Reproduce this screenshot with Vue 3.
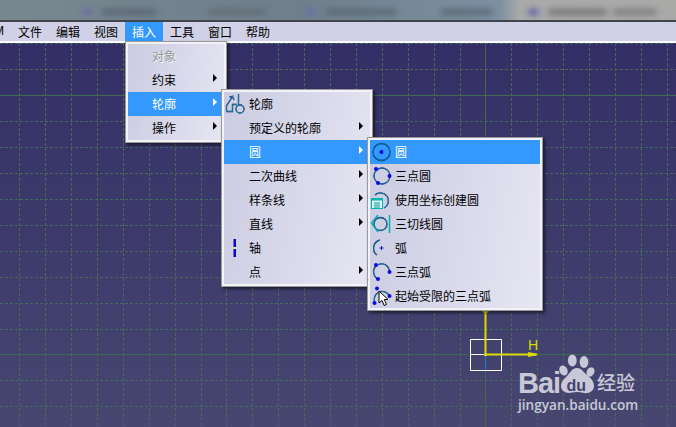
<script setup>
const blobs = [
  { left: 82, width: 10, color: '#6a6aa8' },
  { left: 101, width: 56, color: '#5a6672' },
  { left: 207, width: 60, color: '#626e78' },
  { left: 305, width: 10, color: '#6a6aa8' },
  { left: 325, width: 72, color: '#5c6874' },
  { left: 440, width: 53, color: '#5c6874' },
  { left: 528, width: 11, color: '#5a58a8' },
  { left: 548, width: 59, color: '#747474' },
  { left: 613, width: 44, color: '#7c7c7c' }
]
const topMenus = ['文件', '编辑', '视图', '插入', '工具', '窗口', '帮助']
const vertical = [19, 45, 71, 97, 123, 149, 175, 201, 226, 252, 278, 304, 330, 356, 382, 408, 434, 460, 511, 537, 563, 589, 615, 641, 667]
const horizontal = [43, 69, 121, 147, 173, 199, 225, 251, 277, 303, 329, 380, 406]
const insertRows = [
  { label: '对象', disabled: true },
  { label: '约束', arrow: true },
  { label: '轮廓', arrow: true, active: true },
  { label: '操作', arrow: true }
]
const profileRows = [
  { label: '轮廓', icon: 'profile' },
  { label: '预定义的轮廓', arrow: true },
  { label: '圆', arrow: true, active: true },
  { label: '二次曲线', arrow: true },
  { label: '样条线', arrow: true },
  { label: '直线', arrow: true },
  { label: '轴', icon: 'axis' },
  { label: '点', arrow: true }
]
const circleRows = [
  { label: '圆', icon: 'circle', active: true },
  { label: '三点圆', icon: 'three' },
  { label: '使用坐标创建圆', icon: 'coord' },
  { label: '三切线圆', icon: 'tangent' },
  { label: '弧', icon: 'arc' },
  { label: '三点弧', icon: 'threearc' },
  { label: '起始受限的三点弧', icon: 'limited' }
]
</script>

<template>
  <div class="screen">
    <div class="blurred">
      <span
        v-for="b in blobs"
        :key="b.left"
        class="blob"
        :style="{ left: b.left + 'px', width: b.width + 'px', background: b.color }"
      ></span>
    </div>
    <div class="menubar">
      <span class="clipped">M</span>
      <span v-for="m in topMenus" :key="m" class="top" :class="{ open: m === '插入' }">{{ m }}</span>
    </div>
    <div class="canvas">
      <svg class="scene" viewBox="0 43 676 384" width="676" height="384">
        <g class="dash">
          <line v-for="x in vertical" :key="'v' + x" :x1="x + 0.5" :x2="x + 0.5" y1="43" y2="427" />
          <line v-for="y in horizontal" :key="'h' + y" x1="0" x2="676" :y1="y + 0.5" :y2="y + 0.5" />
        </g>
        <g class="solid">
          <line x1="485.5" x2="485.5" y1="43" y2="427" />
          <line x1="0" x2="676" y1="354.5" y2="354.5" />
          <line x1="0" x2="676" y1="95.5" y2="95.5" />
        </g>
        <g>
          <path d="M470.5 339.5H501.5V370.5H470.5ZM470.5 354.5H485" fill="none" stroke="#fff" />
          <line x1="485.5" x2="485.5" y1="355" y2="370" stroke="#1e78e6" />
          <path d="M485.5 311V354.5H537" fill="none" stroke="#dcdc00" stroke-width="2" />
          <path d="M482 311h7l-2 2h-3zM484 354h3v2h-3zM528 352l8 1.500v2l-8 1.500z" fill="#dcdc00" />
          <text x="528" y="350" class="hlabel">H</text>
        </g>
        <g class="mark">
          <text x="518" y="393" class="bai">Bai</text>
          <ellipse cx="572.300" cy="360.500" rx="4.400" ry="6" />
          <ellipse cx="584" cy="362" rx="4.400" ry="6" />
          <ellipse cx="563.500" cy="370.500" rx="4" ry="5.200" transform="rotate(-25 563.500 370.500)" />
          <ellipse cx="590.500" cy="372" rx="3.800" ry="5" transform="rotate(25 590.500 372)" />
          <path d="M577 368C582 368 584 373 588 376C592 379 594 382 594 386C594 391 589 394 584 393C580 392 576 391.500 572 392.500C566 394 561 391 561 386C561 382 564 379 567 376C570 373 572 368 577 368Z" />
          <text x="566.500" y="391" class="du">du</text>
          <text x="597" y="390" class="jing">经验</text>
          <text x="518" y="410" class="url">jingyan.baidu.com</text>
        </g>
      </svg>
    </div>

    <div class="menu menu-insert">
      <div
        v-for="r in insertRows"
        :key="r.label"
        class="row"
        :class="{ active: r.active, disabled: r.disabled }"
      >
        <span class="slot slot-narrow"></span>
        <span class="label">{{ r.label }}</span>
        <span v-if="r.arrow" class="arrow"></span>
      </div>
    </div>

    <div class="menu menu-profile">
      <div v-for="r in profileRows" :key="r.label + r.arrow" class="row" :class="{ active: r.active }">
        <span class="slot">
          <svg v-if="r.icon === 'profile'" class="icon" viewBox="0 0 24 24">
            <path d="M2.500 19.500V14L8.500 4.500L5.500 5M8.500 4.500L10 8M2.500 19.500H8.500V12.500L13 12.500M14.500 2V12.500" class="ico-outer" />
            <circle cx="16" cy="17" r="4" class="ico-outer" />
            <path d="M2.500 19.500V14L8.500 4.500L5.500 5M8.500 4.500L10 8M2.500 19.500H8.500V12.500L13 12.500M14.500 2V12.500" class="ico-inner" />
            <circle cx="16" cy="17" r="4" class="ico-inner" />
          </svg>
          <svg v-else-if="r.icon === 'axis'" class="icon" viewBox="0 0 24 24">
            <rect x="9.500" y="3" width="2.500" height="8" fill="#0808c8" />
            <rect x="9.500" y="11" width="2.500" height="2" fill="#f0f060" />
            <rect x="9.500" y="13" width="2.500" height="8" fill="#0808c8" />
          </svg>
        </span>
        <span class="label">{{ r.label }}</span>
        <span v-if="r.arrow" class="arrow"></span>
      </div>
    </div>

    <div class="menu menu-circle">
      <div v-for="r in circleRows" :key="r.label" class="row" :class="{ active: r.active }">
        <span class="slot">
          <svg class="icon" viewBox="0 0 24 24">
            <template v-if="r.icon === 'circle'">
              <circle cx="11.500" cy="12" r="8.500" class="ico-outer" />
              <circle cx="11.500" cy="12" r="8.500" class="ico-inner" />
              <circle cx="11.500" cy="12" r="2" class="dot" />
            </template>
            <template v-else-if="r.icon === 'three'">
              <circle cx="12" cy="12" r="8" class="ico-outer" />
              <circle cx="12" cy="12" r="8" class="ico-inner" />
              <circle cx="6" cy="5" r="2" class="dot" />
              <circle cx="19.500" cy="12" r="2" class="dot" />
              <circle cx="8" cy="19" r="2" class="dot" />
            </template>
            <template v-else-if="r.icon === 'coord'">
              <path d="M5 7A8 8 0 1 1 14 20" class="ico-outer" />
              <path d="M5 7A8 8 0 1 1 14 20" class="ico-inner" />
              <rect x="1.500" y="10.500" width="11" height="10" fill="#dff4f4" stroke="#00b4b4" />
              <path d="M2 11.500H12" stroke="#00b4b4" stroke-width="2" />
              <path d="M4 15H10M4 17H10M4 19H10" stroke="#00a0a0" />
            </template>
            <template v-else-if="r.icon === 'tangent'">
              <circle cx="10.500" cy="12" r="6.500" class="ico-outer" />
              <circle cx="10.500" cy="12" r="6.500" class="ico-inner" />
              <path d="M8 3L1.500 11L8 20" fill="none" stroke="#00b0b0" stroke-width="1.500" />
              <path d="M19.500 3V21" stroke="#00b0b0" stroke-width="1.500" />
            </template>
            <template v-else-if="r.icon === 'arc'">
              <path d="M10 4A8.500 8.500 0 0 0 7 19" class="ico-outer" />
              <path d="M10 4A8.500 8.500 0 0 0 7 19" class="ico-inner" />
              <path d="M9.500 12H13.500M11.500 10V14" stroke="#1010e0" />
            </template>
            <template v-else-if="r.icon === 'threearc'">
              <path d="M8 19A8 8 0 1 1 19.500 12" class="ico-outer" />
              <path d="M8 19A8 8 0 1 1 19.500 12" class="ico-inner" />
              <circle cx="6" cy="5" r="2" class="dot" />
              <circle cx="19.500" cy="12" r="2" class="dot" />
              <circle cx="8" cy="19" r="2" class="dot" />
            </template>
            <template v-else>
              <path d="M5 19A8 8 0 1 1 19.500 12" class="ico-outer" />
              <path d="M5 19A8 8 0 1 1 19.500 12" class="ico-inner" />
              <circle cx="7" cy="4.500" r="2" class="dot" />
              <circle cx="19.500" cy="12" r="2" class="dot" />
              <circle cx="4.500" cy="19" r="2" class="dot" />
            </template>
          </svg>
        </span>
        <span class="label">{{ r.label }}</span>
      </div>
    </div>

    <svg class="cursor" viewBox="0 0 12 17" width="12" height="17">
      <path d="M1 1V13L4 10.500L6.200 15.500L8.500 14.500L6.300 9.500H10Z" fill="#fff" stroke="#000" stroke-width="1" />
    </svg>
  </div>
</template>

<style scoped>
.screen {
  position: relative;
  width: 676px;
  height: 427px;
  overflow: hidden;
  display: flex;
  flex-direction: column;
  font-family: "Noto Sans CJK SC", "Liberation Sans", sans-serif;
  font-size: 12px;
  color: #000;
}
.blurred {
  position: relative;
  flex: 0 0 20px;
  overflow: hidden;
  background: linear-gradient(90deg, #788891 0, #6f808b 300px, #7d90a2 500px, #a9aaa9 520px, #a9a9a8 100%);
}
.blob {
  position: absolute;
  top: 9px;
  height: 6px;
  border-radius: 3px;
  filter: blur(3px);
}
.menubar {
  flex: 0 0 19px;
  display: flex;
  align-items: stretch;
  border-top: 2px solid #3f454c;
  border-bottom: 2px solid #fbfbfd;
  background: #d0d0e6;
  line-height: 19px;
}
.clipped {
  flex: 0 0 11px;
  display: flex;
  justify-content: flex-end;
  padding-right: 7px;
  box-sizing: border-box;
  overflow: hidden;
  font-family: "Liberation Sans", sans-serif;
}
.top {
  flex: 0 0 38px;
  text-align: center;
}
.top.open {
  background: #3399ff;
  color: #fff;
}
.canvas {
  flex: 1;
  background: linear-gradient(180deg, #332f66, #474670);
}
.scene {
  display: block;
}
.dash line {
  stroke: #47685c;
  stroke-width: 1;
  stroke-dasharray: 3 2;
}
.solid line {
  stroke: #3f6a50;
  stroke-width: 1;
}
.hlabel {
  font-family: "Liberation Sans", sans-serif;
  font-size: 14px;
  fill: #dcdc00;
}
.mark {
  fill: #c8c8d8;
}
.bai {
  font-family: "Liberation Sans", sans-serif;
  font-weight: 700;
  font-size: 29px;
  letter-spacing: -1px;
}
.du {
  font-family: "Liberation Sans", sans-serif;
  font-weight: 700;
  font-size: 16px;
  fill: #45436f;
}
.jing {
  font-family: "Noto Sans CJK SC", sans-serif;
  font-weight: 500;
  font-size: 19px;
}
.url {
  font-family: "Open Sans", sans-serif;
  font-weight: 600;
  font-size: 13.600px;
}
.menu {
  position: absolute;
  box-sizing: border-box;
  display: flex;
  flex-direction: column;
  border: 1px solid #999;
  padding: 2px;
  background: linear-gradient(100deg, #cbcbe2, #e6e6f3);
  box-shadow: inset 0 0 0 2px #f2f2f8, 2px 2px 3px rgba(0, 0, 0, 0.55);
}
.menu-insert {
  left: 125px;
  top: 41px;
  width: 102px;
}
.menu-profile {
  left: 221px;
  top: 89px;
  width: 152px;
}
.menu-circle {
  left: 367px;
  top: 137px;
  width: 176px;
}
.row {
  position: relative;
  height: 24px;
  display: flex;
  align-items: center;
  line-height: 24px;
}
.row.active {
  background: #3399ff;
  color: #fff;
}
.row.disabled {
  color: #9a9a9a;
  text-shadow: 1px 1px 0 #f4f4f8;
}
.slot {
  flex: 0 0 25px;
  height: 24px;
}
.slot-narrow {
  flex-basis: 24px;
}
.icon {
  display: block;
  width: 24px;
  height: 24px;
}
.arrow {
  margin-left: auto;
  margin-right: 7px;
  margin-bottom: 4px;
  width: 0;
  height: 0;
  border-left: 4px solid #000;
  border-top: 4.500px solid transparent;
  border-bottom: 4.500px solid transparent;
}
.row.active .arrow {
  border-left-color: #fff;
}
.ico-outer {
  fill: none;
  stroke: #00124a;
  stroke-width: 1.300;
}
.ico-inner {
  fill: none;
  stroke: #30d8f8;
  stroke-width: 0.500;
}
.dot {
  fill: #0a0ae6;
}
.cursor {
  position: absolute;
  left: 378px;
  top: 290px;
}
</style>
